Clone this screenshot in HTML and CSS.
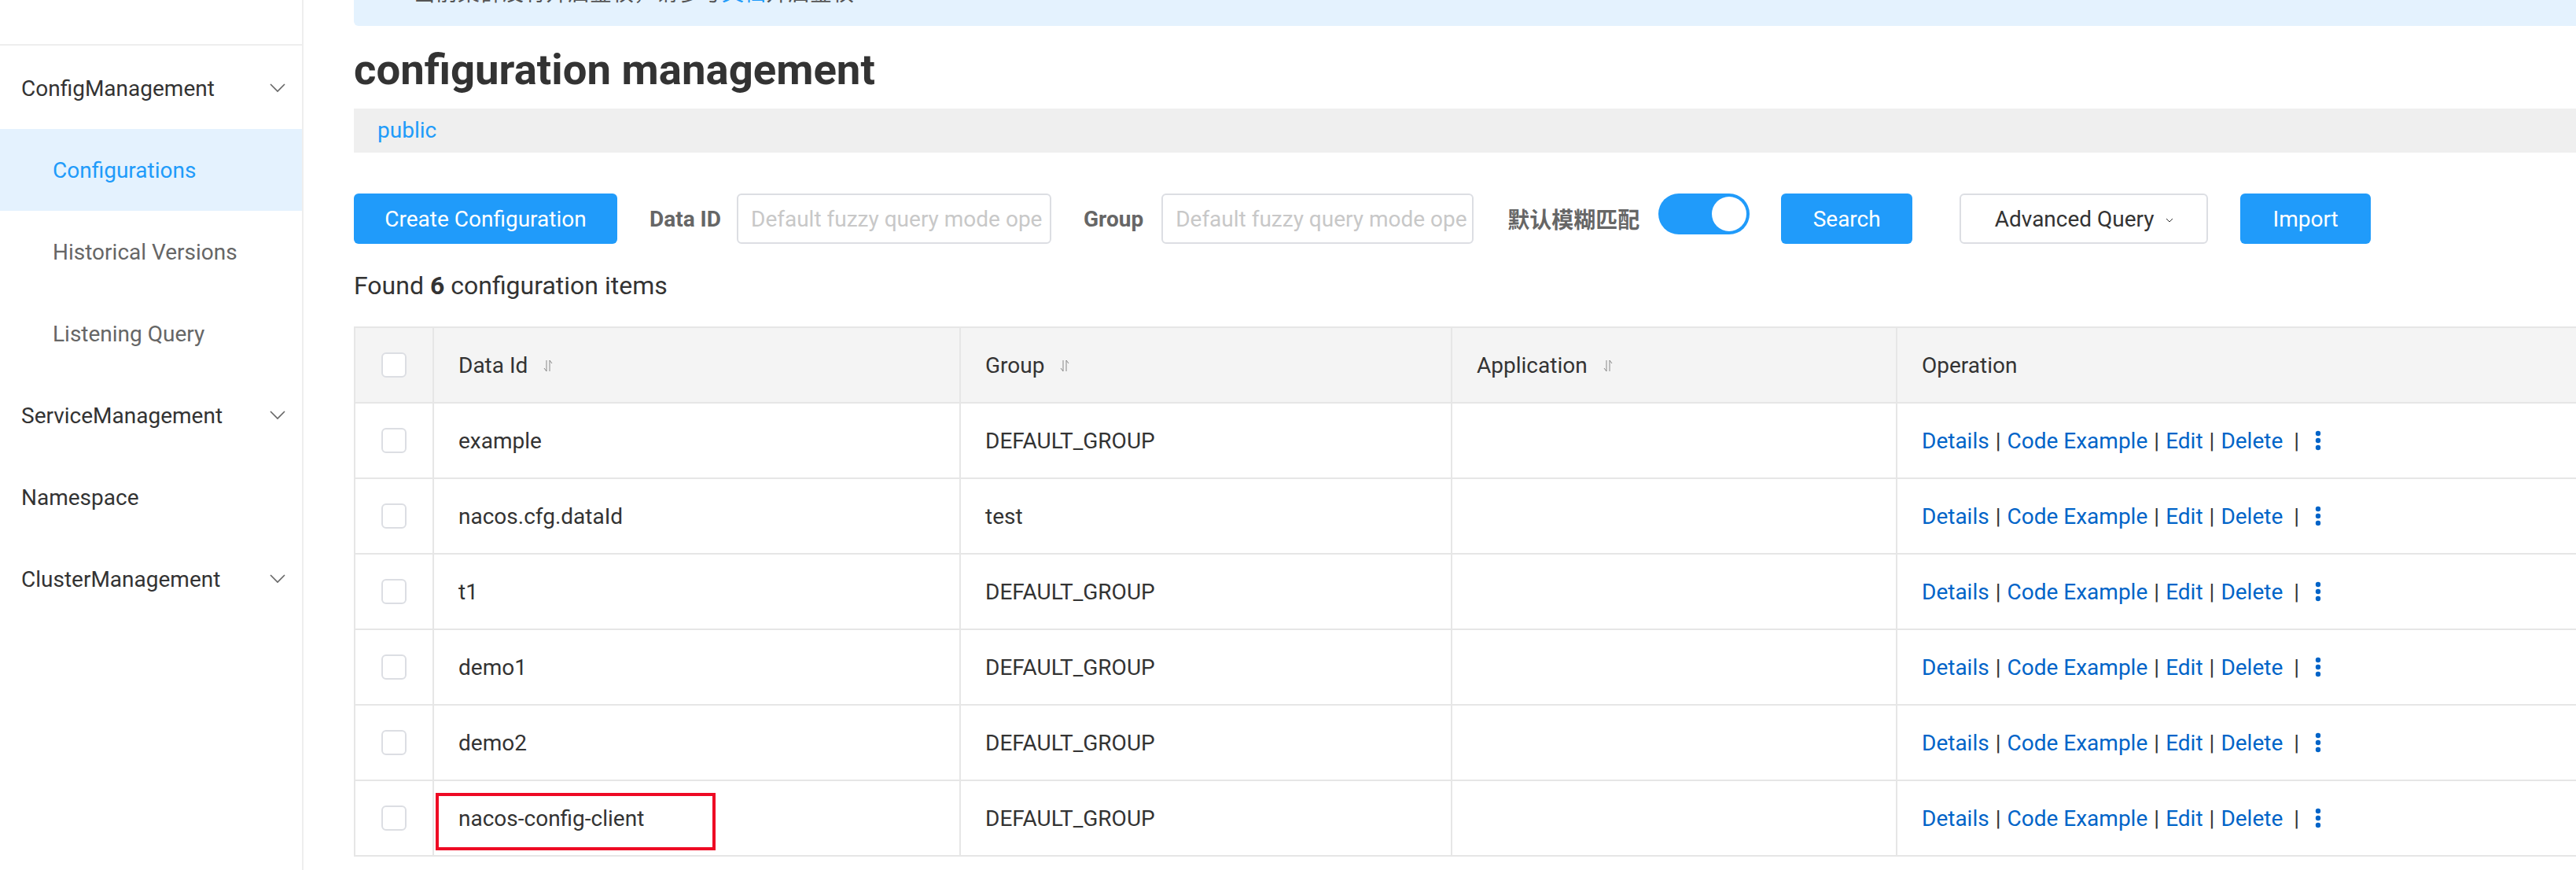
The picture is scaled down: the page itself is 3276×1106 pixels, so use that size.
FILE: index.html
```html
<!DOCTYPE html>
<html lang="en">
<head>
<meta charset="utf-8">
<title>configuration management</title>
<link rel="stylesheet" href="styles.css">
</head>
<body>
<div class="app">
  <aside class="sidebar">
    <div class="brand"></div>
    <nav class="menu">
      <div class="menu-item group">ConfigManagement
        <svg class="chev" width="20" height="12" viewBox="0 0 20 12"><path d="M1 1l9 9 9-9" fill="none" stroke="#666" stroke-width="1.6"/></svg>
      </div>
      <div class="menu-item sub active">Configurations</div>
      <div class="menu-item sub">Historical Versions</div>
      <div class="menu-item sub">Listening Query</div>
      <div class="menu-item group">ServiceManagement
        <svg class="chev" width="20" height="12" viewBox="0 0 20 12"><path d="M1 1l9 9 9-9" fill="none" stroke="#666" stroke-width="1.6"/></svg>
      </div>
      <div class="menu-item group">Namespace</div>
      <div class="menu-item group">ClusterManagement
        <svg class="chev" width="20" height="12" viewBox="0 0 20 12"><path d="M1 1l9 9 9-9" fill="none" stroke="#666" stroke-width="1.6"/></svg>
      </div>
    </nav>
  </aside>

  <main class="main">
    <div class="content">
      <div class="alert">
        <svg class="alert-icon" width="22" height="22" viewBox="0 0 22 22"><circle cx="11" cy="11" r="9" fill="none" stroke="#209bfa" stroke-width="2"/></svg>
        <span class="alert-text">当前集群没有开启鉴权，请参考<span class="alert-link">文档</span>开启鉴权～</span>
      </div>

      <h1 class="page-title">configuration management</h1>

      <div class="ns-bar"><span class="ns-link">public</span></div>

      <div class="toolbar">
        <button class="btn primary btn-create">Create Configuration</button>
        <span class="label l-dataid">Data ID</span>
        <div class="input in-dataid">Default fuzzy query mode ope</div>
        <span class="label l-group">Group</span>
        <div class="input in-group">Default fuzzy query mode ope</div>
        <span class="label l-fuzzy">默认模糊匹配</span>
        <span class="switch"><span class="knob"></span></span>
        <button class="btn primary btn-search">Search</button>
        <button class="btn normal btn-adv">Advanced Query
          <svg class="adv-chev" width="10" height="6" viewBox="0 0 10 6"><path d="M1 1l4 4 4-4" fill="none" stroke="#333" stroke-width="1"/></svg>
        </button>
        <button class="btn primary btn-import">Import</button>
      </div>

      <div class="count">Found <b>6</b> configuration items</div>

      <div class="table">
        <div class="tr th">
          <div class="td c-check"><span class="checkbox"></span></div>
          <div class="td">Data Id
            <svg class="sort" width="12" height="16" viewBox="0 0 12 16"><path d="M4 1v14l-3-4M8 15V1l3 4" fill="none" stroke="#888" stroke-width="1"/></svg>
          </div>
          <div class="td">Group
            <svg class="sort" width="12" height="16" viewBox="0 0 12 16"><path d="M4 1v14l-3-4M8 15V1l3 4" fill="none" stroke="#888" stroke-width="1"/></svg>
          </div>
          <div class="td">Application
            <svg class="sort" width="12" height="16" viewBox="0 0 12 16"><path d="M4 1v14l-3-4M8 15V1l3 4" fill="none" stroke="#888" stroke-width="1"/></svg>
          </div>
          <div class="td">Operation</div>
        </div>

        <div class="tr">
          <div class="td c-check"><span class="checkbox"></span></div>
          <div class="td">example</div>
          <div class="td">DEFAULT_GROUP</div>
          <div class="td"></div>
          <div class="td ops"><a>Details</a><span class="sep">|</span><a>Code Example</a><span class="sep">|</span><a>Edit</a><span class="sep">|</span><a>Delete</a><span class="sep last">|</span><svg class="more" width="8" height="26" viewBox="0 0 8 26"><circle cx="4" cy="4" r="3.2" fill="#0064c8"/><circle cx="4" cy="13" r="3.2" fill="#0064c8"/><circle cx="4" cy="22" r="3.2" fill="#0064c8"/></svg></div>
        </div>

        <div class="tr">
          <div class="td c-check"><span class="checkbox"></span></div>
          <div class="td">nacos.cfg.dataId</div>
          <div class="td">test</div>
          <div class="td"></div>
          <div class="td ops"><a>Details</a><span class="sep">|</span><a>Code Example</a><span class="sep">|</span><a>Edit</a><span class="sep">|</span><a>Delete</a><span class="sep last">|</span><svg class="more" width="8" height="26" viewBox="0 0 8 26"><circle cx="4" cy="4" r="3.2" fill="#0064c8"/><circle cx="4" cy="13" r="3.2" fill="#0064c8"/><circle cx="4" cy="22" r="3.2" fill="#0064c8"/></svg></div>
        </div>

        <div class="tr">
          <div class="td c-check"><span class="checkbox"></span></div>
          <div class="td">t1</div>
          <div class="td">DEFAULT_GROUP</div>
          <div class="td"></div>
          <div class="td ops"><a>Details</a><span class="sep">|</span><a>Code Example</a><span class="sep">|</span><a>Edit</a><span class="sep">|</span><a>Delete</a><span class="sep last">|</span><svg class="more" width="8" height="26" viewBox="0 0 8 26"><circle cx="4" cy="4" r="3.2" fill="#0064c8"/><circle cx="4" cy="13" r="3.2" fill="#0064c8"/><circle cx="4" cy="22" r="3.2" fill="#0064c8"/></svg></div>
        </div>

        <div class="tr">
          <div class="td c-check"><span class="checkbox"></span></div>
          <div class="td">demo1</div>
          <div class="td">DEFAULT_GROUP</div>
          <div class="td"></div>
          <div class="td ops"><a>Details</a><span class="sep">|</span><a>Code Example</a><span class="sep">|</span><a>Edit</a><span class="sep">|</span><a>Delete</a><span class="sep last">|</span><svg class="more" width="8" height="26" viewBox="0 0 8 26"><circle cx="4" cy="4" r="3.2" fill="#0064c8"/><circle cx="4" cy="13" r="3.2" fill="#0064c8"/><circle cx="4" cy="22" r="3.2" fill="#0064c8"/></svg></div>
        </div>

        <div class="tr">
          <div class="td c-check"><span class="checkbox"></span></div>
          <div class="td">demo2</div>
          <div class="td">DEFAULT_GROUP</div>
          <div class="td"></div>
          <div class="td ops"><a>Details</a><span class="sep">|</span><a>Code Example</a><span class="sep">|</span><a>Edit</a><span class="sep">|</span><a>Delete</a><span class="sep last">|</span><svg class="more" width="8" height="26" viewBox="0 0 8 26"><circle cx="4" cy="4" r="3.2" fill="#0064c8"/><circle cx="4" cy="13" r="3.2" fill="#0064c8"/><circle cx="4" cy="22" r="3.2" fill="#0064c8"/></svg></div>
        </div>

        <div class="tr">
          <div class="td c-check"><span class="checkbox"></span></div>
          <div class="td marked">nacos-config-client<span class="annot"></span></div>
          <div class="td">DEFAULT_GROUP</div>
          <div class="td"></div>
          <div class="td ops"><a>Details</a><span class="sep">|</span><a>Code Example</a><span class="sep">|</span><a>Edit</a><span class="sep">|</span><a>Delete</a><span class="sep last">|</span><svg class="more" width="8" height="26" viewBox="0 0 8 26"><circle cx="4" cy="4" r="3.2" fill="#0064c8"/><circle cx="4" cy="13" r="3.2" fill="#0064c8"/><circle cx="4" cy="22" r="3.2" fill="#0064c8"/></svg></div>
        </div>
      </div>
    </div>
  </main>
</div>
</body>
</html>
```

FILE: styles.css
```css
* { box-sizing: border-box; }
html, body {
  margin: 0;
  padding: 0;
  overflow: hidden;
  background: #fff;
}
body {
  font-family: Roboto, "Noto Sans CJK SC", sans-serif;
  font-size: 28px;
  color: #333;
}
.app {
  display: flex;
  width: 3276px;
  height: 1106px;
}

/* sidebar */
.sidebar {
  width: 386px;
  flex: none;
  border-right: 2px solid #eeeeee;
  background: #fff;
}
.brand {
  height: 58px;
  border-bottom: 2px solid #eeeeee;
}
.menu { padding-top: 2px; }
.menu-item {
  height: 104px;
  display: flex;
  align-items: center;
  justify-content: space-between;
  padding-right: 21px;
  white-space: nowrap;
}
.menu-item.group {
  padding-left: 27px;
  color: #333;
}
.menu-item.sub {
  padding-left: 67px;
  color: #666;
}
.menu-item.active {
  background: #e4f2fe;
  color: #209bfa;
}
.chev { flex: none; }

/* main */
.main {
  flex: 1;
  padding-left: 64px;
  overflow: hidden;
}
.content { width: 2950px; }

.alert {
  height: 84px;
  margin-top: -51px;
  background: #e4f2fe;
  border-radius: 6px;
  display: flex;
  align-items: center;
  padding-left: 32px;
  padding-bottom: 5px;
  color: #555;
}
.alert-icon { margin-right: 22px; flex: none; }
.alert-link { color: #209bfa; }

.page-title {
  margin: 23px 0 0;
  font-size: 54.5px;
  line-height: 64px;
  font-weight: 700;
  color: #333;
}

.ns-bar {
  margin-top: 18px;
  height: 56px;
  line-height: 56px;
  background: #efefef;
  padding-left: 30px;
}
.ns-link { color: #209bfa; }

/* toolbar */
.toolbar {
  margin-top: 52px;
  height: 64px;
  display: flex;
  align-items: center;
  white-space: nowrap;
}
.btn {
  height: 64px;
  border-radius: 6px;
  font-family: Roboto, sans-serif;
  font-size: 28px;
  padding: 0;
  flex: none;
}
.btn.primary {
  background: #209bfa;
  border: none;
  color: #fff;
}
.btn.normal {
  background: #fff;
  border: 2px solid #dcdee3;
  color: #333;
}
.btn-create { width: 335px; margin-right: 41px; }
.btn-search { width: 167px; margin-right: 60px; }
.btn-adv {
  width: 316px;
  margin-right: 41px;
  display: flex;
  align-items: center;
  justify-content: center;
}
.adv-chev { margin-left: 14px; margin-top: 4px; }
.btn-import { width: 166px; }

.label {
  font-weight: 700;
  color: #666;
  flex: none;
}
.l-dataid { margin-right: 20px; }
.l-group { margin-right: 23px; }
.l-fuzzy { margin-right: 24px; }

.input {
  height: 64px;
  border: 2px solid #dcdee3;
  border-radius: 6px;
  display: flex;
  align-items: center;
  padding-left: 16px;
  color: #c8c8c8;
  overflow: hidden;
  flex: none;
}
.in-dataid { width: 400px; margin-right: 41px; }
.in-group { width: 397px; margin-right: 43px; }

.switch {
  align-self: flex-start;
  width: 116px;
  height: 52px;
  border-radius: 26px;
  background: #209bfa;
  display: flex;
  align-items: center;
  justify-content: flex-end;
  padding-right: 4px;
  margin-right: 40px;
  flex: none;
}
.knob {
  width: 44px;
  height: 44px;
  border-radius: 50%;
  background: #fff;
}

.count {
  margin-top: 33px;
  font-size: 32px;
  line-height: 40px;
  color: #333;
}
.count b { font-weight: 700; }

/* table */
.table {
  margin-top: 32px;
  border-top: 2px solid #e6e6e6;
  border-left: 2px solid #e6e6e6;
}
.tr {
  display: grid;
  grid-template-columns: 100px 670px 625px 566px 1fr;
  height: 96px;
  border-bottom: 2px solid #e6e6e6;
}
.tr.th { background: #f4f4f4; }
.td {
  border-right: 2px solid #e6e6e6;
  display: flex;
  align-items: center;
  padding-left: 31px;
  white-space: nowrap;
  color: #333;
}
.td.c-check {
  padding-left: 0;
  justify-content: center;
}
.checkbox {
  width: 32px;
  height: 32px;
  border: 2px solid #dcdee3;
  border-radius: 6px;
  background: #fff;
}
.sort { margin-left: 20px; margin-top: 2px; }

.ops a { color: #0064c8; }
.sep {
  color: #333;
  margin: 0 8px;
}
.sep.last { margin-left: 14px; }
.more { margin-left: 12px; }

.td.marked { position: relative; }
.annot {
  position: absolute;
  left: 2px;
  top: 15px;
  width: 356px;
  height: 73px;
  border: 4px solid #ee0a24;
}
```
